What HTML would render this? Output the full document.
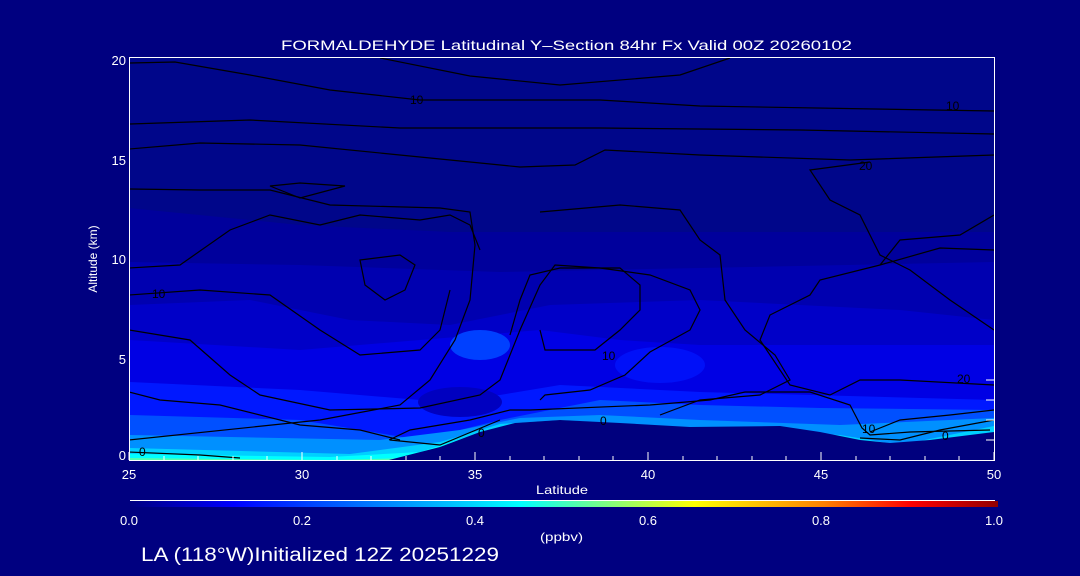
<!DOCTYPE html>
<html><head><meta charset="utf-8"><style>
html,body{margin:0;padding:0;background:#000080;width:1080px;height:576px;overflow:hidden}
svg{display:block}
text{font-family:"Liberation Sans",sans-serif;fill:#fff}
</style></head><body>
<svg width="1080" height="576" viewBox="0 0 1080 576" xmlns="http://www.w3.org/2000/svg">
<defs>
<linearGradient id="cb" x1="0" x2="1" y1="0" y2="0">
<stop offset="0" stop-color="#000080"/>
<stop offset="0.12" stop-color="#0000ff"/>
<stop offset="0.35" stop-color="#00b0ff"/>
<stop offset="0.45" stop-color="#00ffff"/>
<stop offset="0.55" stop-color="#80ff80"/>
<stop offset="0.65" stop-color="#ffff00"/>
<stop offset="0.8" stop-color="#ff8000"/>
<stop offset="0.9" stop-color="#ff0000"/>
<stop offset="1" stop-color="#900000"/>
</linearGradient>
<clipPath id="pc"><rect x="130" y="58" width="864" height="402"/></clipPath>
</defs>
<rect width="1080" height="576" fill="#000080"/>
<g clip-path="url(#pc)">
<rect x="130" y="58" width="864" height="402" fill="#00068a"/>
<polygon fill="#00009c" points="129,208 300,225 450,232 994,232 994,461 129,461"/>
<polygon fill="#0000b0" points="129,262 300,265 500,272 700,268 994,262 994,461 129,461"/>
<polygon fill="#0000c8" points="129,305 250,300 350,320 450,325 550,305 700,300 900,310 994,320 994,461 129,461"/>
<polygon fill="#0000e4" points="129,340 300,350 420,340 540,330 620,340 700,345 994,345 994,461 129,461"/>
<ellipse cx="660" cy="365" rx="45" ry="18" fill="#0010f8"/>
<polygon fill="#0018ff" points="129,382 300,390 420,400 500,395 560,385 700,392 994,400 994,461 129,461"/>
<ellipse cx="480" cy="345" rx="30" ry="15" fill="#0040ff"/>
<ellipse cx="460" cy="402" rx="42" ry="15" fill="#0000c0"/>
<polygon fill="#0050ff" points="129,415 300,420 420,440 500,420 600,400 700,405 820,408 994,410 994,461 129,461"/>
<polygon fill="#0090ff" points="129,435 380,440 460,430 520,418 600,415 700,420 840,425 994,418 994,461 129,461"/>
<polygon fill="#00d0ff" points="129,448 350,454 440,442 500,424 560,420 700,428 840,435 900,445 994,426 994,461 129,461"/>
<polygon fill="#00ffff" points="129,454 330,457 420,452 470,436 520,426 700,432 840,440 880,450 994,432 994,461 129,461"/>
<polygon fill="#50ffb0" points="129,458 330,460 410,458 460,442 880,454 994,461 129,461"/>
<polygon fill="#00007e" points="385,461 440,447 480,432 515,423 560,420 620,423 690,427 780,426 820,432 860,440 890,443 930,440 994,432 994,461"/>
<g fill="none" stroke="#000" stroke-width="1.2">
<path d="M129,63 L175,62 L250,75 L330,90 L420,100 L600,100 L700,106 L994,111"/>
<path d="M380,58 L470,76 L560,85 L680,75 L730,58"/>
<path d="M129,124 L250,120 L400,128 L600,128 L800,130 L994,134"/>
<path d="M129,149 L200,143 L300,145 L420,157 L520,167 L575,165 L605,150 L700,155 L850,160 L994,155"/>
<path d="M129,189 L200,190 L270,190 L330,205 L440,208 L470,212 L475,245 L470,300 L455,340 L430,380 L400,405 L320,420 L129,440"/>
<path d="M270,186 L300,183 L345,186 L300,198 Z"/>
<path d="M129,268 L180,265 L230,230 L270,215 L320,225 L360,215 L420,220 L450,215 L470,225 L480,250"/>
<path d="M129,295 L200,290 L270,295 L320,330 L360,355 L420,350 L440,330 L450,290"/>
<path d="M360,260 L400,255 L415,265 L405,290 L385,300 L365,285 Z"/>
<path d="M129,330 L190,340 L230,375 L260,395 L330,410 L420,408 L480,395 L500,380 L520,330 L540,285 L555,265 L600,268 L650,275 L690,290 L700,310 L690,330 L650,352 L625,375 L590,390 L545,395 L540,400"/>
<path d="M510,335 L520,300 L530,275 L560,268 L620,268 L640,285 L640,310 L620,330 L595,350 L545,350 L540,330"/>
<path d="M540,212 L620,205 L680,210 L700,240 L720,255 L725,300 L745,330 L775,355 L790,380 L760,395 L700,400 L660,415"/>
<path d="M129,392 L160,400 L220,405 L300,425 L360,430 L400,440"/>
<path d="M389,440 L410,430 L470,420 L510,410 L530,410 L650,405 L710,400 L745,392 L810,392 L850,405 L862,428 L870,435 L910,432 L990,430"/>
<path d="M994,250 L940,248 L880,265 L820,280 L810,295 L770,315 L760,340 L790,385 L830,395 L860,380 L900,380 L994,385"/>
<path d="M994,215 L960,235 L900,240 L880,265"/>
<path d="M994,410 L950,415 L900,420 L870,432"/>
<path d="M129,452 L200,455 L240,458"/>
<path d="M390,440 L440,445 L500,420"/>
<path d="M994,420 L940,430 L900,440 L860,438"/>
<path d="M994,330 L950,300 L910,270 L880,255 L860,215 L830,200 L810,170 L870,162"/>
</g>
</g>
<rect x="129.5" y="57.5" width="865" height="403" fill="none" stroke="#fff" stroke-width="1"/>
<g stroke="#fff" stroke-width="1">
<path d="M129,460v-8M302,460v-8M475,460v-8M648,460v-8M821,460v-8M994,460v-8"/>
<path d="M164,460v-4M198,460v-4M233,460v-4M267,460v-4M337,460v-4M371,460v-4M406,460v-4M440,460v-4M510,460v-4M544,460v-4M579,460v-4M613,460v-4M683,460v-4M717,460v-4M752,460v-4M786,460v-4M856,460v-4M890,460v-4M925,460v-4M959,460v-4"/>
<path d="M994,440h-8M994,420h-8M994,400h-8M994,380h-8"/>
</g>
<g font-size="12"><text x="410" y="104" style="fill:#000">10</text><text x="946" y="110" style="fill:#000">10</text><text x="152" y="298" style="fill:#000">10</text><text x="602" y="360" style="fill:#000">10</text><text x="862" y="433" style="fill:#000">10</text><text x="957" y="383" style="fill:#000">20</text><text x="859" y="170" style="fill:#000">20</text><text x="139" y="456" style="fill:#000">0</text><text x="478" y="437" style="fill:#000">0</text><text x="600" y="425" style="fill:#000">0</text><text x="942" y="440" style="fill:#000">0</text></g>
<text x="281" y="50" font-size="14" textLength="571" lengthAdjust="spacingAndGlyphs">FORMALDEHYDE Latitudinal Y–Section 84hr  Fx Valid 00Z 20260102</text>
<g font-size="13" text-anchor="end"><text x="126" y="65">20</text><text x="126" y="165">15</text><text x="126" y="264">10</text><text x="126" y="364">5</text><text x="126" y="460">0</text></g>
<g font-size="13" text-anchor="middle"><text x="129" y="479">25</text><text x="302" y="479">30</text><text x="475" y="479">35</text><text x="648" y="479">40</text><text x="821" y="479">45</text><text x="994" y="479">50</text></g>
<text x="536" y="494" font-size="12" textLength="52" lengthAdjust="spacingAndGlyphs">Latitude</text>
<text transform="translate(97,259) rotate(-90)" font-size="12" text-anchor="middle">Altitude (km)</text>
<line x1="130" y1="500.5" x2="995" y2="500.5" stroke="#fff"/>
<rect x="130" y="501" width="868" height="6" fill="url(#cb)"/>
<g font-size="13" text-anchor="middle"><text x="129" y="525">0.0</text><text x="302" y="525">0.2</text><text x="475" y="525">0.4</text><text x="648" y="525">0.6</text><text x="821" y="525">0.8</text><text x="994" y="525">1.0</text></g>
<text x="540" y="541" font-size="12" textLength="43" lengthAdjust="spacingAndGlyphs">(ppbv)</text>
<text x="141" y="561" font-size="19" textLength="358" lengthAdjust="spacingAndGlyphs">LA (118°W)Initialized 12Z 20251229</text>
</svg>
</body></html>
